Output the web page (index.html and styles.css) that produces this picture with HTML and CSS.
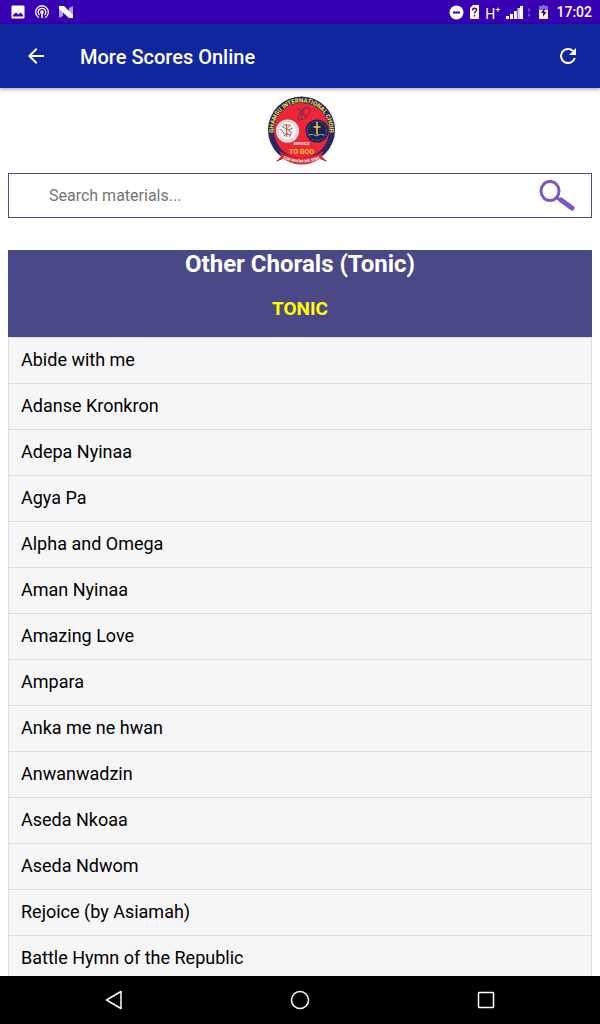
FILE: index.html
```html
<!DOCTYPE html>
<html lang="en">
<head>
  <meta charset="UTF-8" />
  <meta name="viewport" content="width=device-width, initial-scale=1.0"/>
  <title>More Scores Online</title>
  <link rel="stylesheet" href="styles.css">
</head>
<body>
  <div class="status-bar">
    <div class="status-left">
      <svg width="14" height="14" viewBox="0 0 14 14"><path fill="#fff" fill-rule="evenodd" d="M1.5 0.5h11a1 1 0 0 1 1 1v11a1 1 0 0 1-1 1h-11a1 1 0 0 1-1-1v-11a1 1 0 0 1 1-1zM2 11.5h10V10L9.500 7.500l-2 2L5 7.500 2 10z"/></svg>
      <svg width="14" height="14" viewBox="0 0 14 14" fill="none" stroke="#fff" stroke-width="1.3"><path d="M4 12.600a6.300 6.300 0 1 1 6 0M4.500 10a3.800 3.800 0 1 1 5 0"/><circle cx="7" cy="7" r="1.200" fill="#fff"/><path d="M7 8v5" stroke-width="1.500"/></svg>
      <svg width="15" height="14" viewBox="0 0 15 14"><path fill="#b59ae6" d="M0 2l4 3v6l-4 2zM14 1v11l-4-3V3z"/><path fill="#fff" d="M0 1h5l9 9v3h-4L0 4z"/></svg>
    </div>
    <div class="status-right">
      <svg width="15" height="15" viewBox="0 0 15 15"><circle cx="7.500" cy="7.500" r="7" fill="#fff"/><path d="M4 7.500h7" stroke="#3700b3" stroke-width="2"/></svg>
      <svg width="9" height="14" viewBox="0 0 9 14"><path fill="#fff" d="M3 0h5a1 1 0 0 1 1 1v12a1 1 0 0 1-1 1H1a1 1 0 0 1-1-1V3z"/><path d="M2.500 5.500c0-3 4-3 4-.5 0 1.500-2 1.500-2 3.500M4.500 10v1.500" fill="none" stroke="#3700b3" stroke-width="1.400"/></svg>
      <span class="network">H<sup>+</sup></span>
      <svg width="27" height="14" viewBox="0 0 27 14"><path fill="#fff" d="M0 11h3v3H0zM4 9h3v5H4zM8 6h2v8H8zM14 1h3v13h-3z"/><path fill="#d9ccf3" d="M10 6h1v8h-1zM11.500 3H14v11h-2.500z"/><path fill="#7049cb" d="M22 3l3 2-3 2zM22 8l3 2-3 2z"/></svg>
      <svg width="9" height="14" viewBox="0 0 9 14"><path fill="#8766d3" d="M3 0h3v1h3v5H0V1h3z"/><path fill="#fff" d="M0 5h9v8a1 1 0 0 1-1 1H1a1 1 0 0 1-1-1z"/><path fill="#3700b3" d="M5.500 3L2 8h2v4l3.500-5h-2z"/></svg>
      <span class="clock">17:02</span>
    </div>
  </div>

  <header class="app-bar">
    <button class="icon-btn" aria-label="Back">
      <svg width="24" height="24" viewBox="0 0 24 24"><path fill="#fff" d="M20 11H7.830l5.590-5.590L12 4l-8 8 8 8 1.410-1.410L7.830 13H20z"/></svg>
    </button>
    <h1>More Scores Online</h1>
    <button class="icon-btn" aria-label="Refresh">
      <svg width="24" height="24" viewBox="0 0 24 24"><path fill="#fff" d="M17.650 6.350A7.960 7.960 0 0 0 12 4a8 8 0 1 0 7.730 10h-2.080A6 6 0 1 1 12 6c1.660 0 3.140.69 4.220 1.780L13 11h7V4z"/></svg>
    </button>
  </header>

  <main>
    <svg class="emblem" width="72" height="72" viewBox="-3.5 1 72 72" role="img" aria-label="Choir emblem">
      <defs>
        <path id="topArc" d="M9 48A28 28 0 1 1 59 48"/>
        <path id="bottomArc" d="M14 63Q34 72 54 63"/>
      </defs>
      <circle cx="34" cy="35" r="33.500" fill="#29295f"/>
      <circle cx="34" cy="35.500" r="27.500" fill="#ee2637"/>
      <text class="ring-text"><textPath href="#topArc" startOffset="50%" text-anchor="middle">GHAMSU INTERNATIONAL CHOIR</textPath></text>
      <path d="M30 24l4-9 7-3 2 4-5 7-6 2zM33 18l5 4M30 13l8 8M37 12l-4 13" fill="none" stroke="#713052" stroke-width="1"/>
      <circle cx="20" cy="36" r="11.500" fill="#f4f1ee"/>
      <circle cx="20" cy="36" r="9.500" fill="none" stroke="#b9b9ae" stroke-width="1" stroke-dasharray="2 1"/>
      <path d="M16 30h7l-4 4 5 3-2 5M13 34l4 5 6 1M19 29v13" fill="none" stroke="#d65b55" stroke-width="1"/>
      <path d="M14 31l5 3M21 35l4-2M16 41l5-3" stroke="#4d8173" stroke-width="1"/>
      <circle cx="49.500" cy="36" r="11.500" fill="#1c214f"/>
      <circle cx="49.500" cy="36" r="9.500" fill="none" stroke="#53649b" stroke-width="1" stroke-dasharray="2 1"/>
      <path d="M49.500 27v13M46 32h7" stroke="#f1d33b" stroke-width="1.500"/>
      <path d="M41 40q4-2 8 1 4-3 8-1" fill="none" stroke="#9babc0" stroke-width="1"/>
      <text class="service" x="34" y="50" text-anchor="middle">SERVICE</text>
      <text class="to-god" x="34" y="59" text-anchor="middle">TO GOD</text>
      <path d="M9 66l5-2M54 64l5 2" stroke="#29295f" stroke-width="1"/>
      <path d="M12 56Q34 70 56 56l-2 5 4 4-6-1Q34 75 16 64l-6 1 4-4z" fill="#df2636"/>
      <text class="motto"><textPath href="#bottomArc" startOffset="50%" text-anchor="middle">FOR WHOM WE SING</textPath></text>
      <path d="M3 37h3M62 37h3" stroke="#8f8dab" stroke-width="1"/>
    </svg>

    <form class="search">
      <input type="text" placeholder="Search materials..." aria-label="Search materials">
      <button type="button" aria-label="Search">
        <svg width="38" height="34" viewBox="0 0 38 34" fill="none" stroke="#7e57c2"><ellipse cx="12" cy="12" rx="9" ry="9.500" stroke-width="3"/><path d="M18 18l4 3" stroke-width="3"/><path d="M23 21l11 8" stroke-width="5" stroke-linecap="round"/></svg>
      </button>
    </form>

    <div class="list-title">
      <h2>Other Chorals (Tonic)</h2>
      <h3>TONIC</h3>
    </div>
    <ul class="scores">
      <li><a href="#">Abide with me</a></li>
      <li><a href="#">Adanse Kronkron</a></li>
      <li><a href="#">Adepa Nyinaa</a></li>
      <li><a href="#">Agya Pa</a></li>
      <li><a href="#">Alpha and Omega</a></li>
      <li><a href="#">Aman Nyinaa</a></li>
      <li><a href="#">Amazing Love</a></li>
      <li><a href="#">Ampara</a></li>
      <li><a href="#">Anka me ne hwan</a></li>
      <li><a href="#">Anwanwadzin</a></li>
      <li><a href="#">Aseda Nkoaa</a></li>
      <li><a href="#">Aseda Ndwom</a></li>
      <li><a href="#">Rejoice (by Asiamah)</a></li>
      <li><a href="#">Battle Hymn of the Republic</a></li>
    </ul>
  </main>

  <nav class="nav-bar">
    <button aria-label="Back"><svg width="20" height="20" viewBox="0 0 20 20"><path d="M17 1.500v17L2.500 10z"/></svg></button>
    <button aria-label="Home"><svg width="20" height="20" viewBox="0 0 20 20"><circle cx="10" cy="10" r="8.500"/></svg></button>
    <button aria-label="Recent apps"><svg width="20" height="20" viewBox="0 0 20 20"><rect x="2.500" y="2.500" width="15" height="15" rx=".5"/></svg></button>
  </nav>
</body>
</html>
```
FILE: styles.css
```css
* { box-sizing: border-box; }
body {
  margin: 0;
  height: 100vh;
  display: flex;
  flex-direction: column;
  font-family: Roboto, "Liberation Sans", sans-serif;
  background: #fff;
  color: #000;
}
svg { display: block; flex-shrink: 0; }
button {
  border: none;
  background: none;
  padding: 0;
  cursor: pointer;
}

/* Status bar */
.status-bar {
  height: 24px;
  flex-shrink: 0;
  display: flex;
  align-items: center;
  justify-content: space-between;
  padding: 0 8px 0 11px;
  background: #3700b3;
  color: #fff;
}
.status-left { display: flex; align-items: center; gap: 10px; }
.status-right { display: flex; align-items: center; gap: 6px; }
.network { font-size: 14px; line-height: 16px; padding-top: 4px; }
.network sup { font-size: 9px; line-height: 0; }
.clock { font-size: 14px; font-weight: 500; line-height: 16px; padding-left: 2px; }

/* App bar */
.app-bar {
  height: 64px;
  flex-shrink: 0;
  display: flex;
  align-items: center;
  padding: 0 8px 0 12px;
  background: #10269f;
  color: #fff;
  box-shadow: 0 1px 4px rgba(0,0,0,0.4);
  position: relative;
}
.icon-btn {
  width: 48px;
  height: 48px;
  display: flex;
  align-items: center;
  justify-content: center;
}
.app-bar h1 {
  flex: 1;
  margin: 0;
  padding: 2px 0 0 20px;
  font-size: 20px;
  font-weight: 500;
  line-height: 24px;
}

main {
  flex: 1;
  min-height: 0;
  overflow: hidden;
  padding: 8px 8px 0;
}

/* Emblem */
.emblem { margin: 0 auto 5px; }
.emblem text { font-weight: bold; }
.ring-text { font-size: 6px; fill: #f0e83c; }
.service { font-size: 4px; fill: #fff; }
.to-god { font-size: 7px; fill: #ffd52b; }
.motto { font-size: 4px; fill: #fff; }

/* Search */
.search {
  display: flex;
  align-items: center;
  height: 45px;
  margin-bottom: 32px;
  padding: 0 15px 0 40px;
  border: 1px solid #4b4888;
}
.search input {
  flex: 1;
  min-width: 0;
  border: none;
  outline: none;
  padding: 0;
  font-family: inherit;
  font-size: 16px;
  background: none;
}
.search input::placeholder { color: #757575; }

/* List */
.list-title {
  background: #4b4888;
  text-align: center;
}
.list-title h2 {
  margin: 0;
  font-size: 24px;
  line-height: 28px;
  color: #fff;
}
.list-title h3 {
  margin: 0;
  padding: 20px 0 17px;
  font-size: 19px;
  line-height: 22px;
  color: #ff0;
}
.scores {
  list-style: none;
  margin: 0;
  padding: 0;
}
.scores a {
  display: block;
  margin-bottom: -1px;
  padding: 11px 12px 13px;
  border: 1px solid #ddd;
  background: #f6f6f6;
  color: #000;
  font-size: 18px;
  line-height: 21px;
  text-decoration: none;
}

/* Navigation bar */
.nav-bar {
  height: 48px;
  flex-shrink: 0;
  display: flex;
  padding: 0 21px;
  background: #000;
}
.nav-bar button {
  flex: 1;
  display: flex;
  align-items: center;
  justify-content: center;
}
.nav-bar svg {
  fill: none;
  stroke: #fff;
  stroke-width: 1.5;
  stroke-linejoin: round;
}
```
